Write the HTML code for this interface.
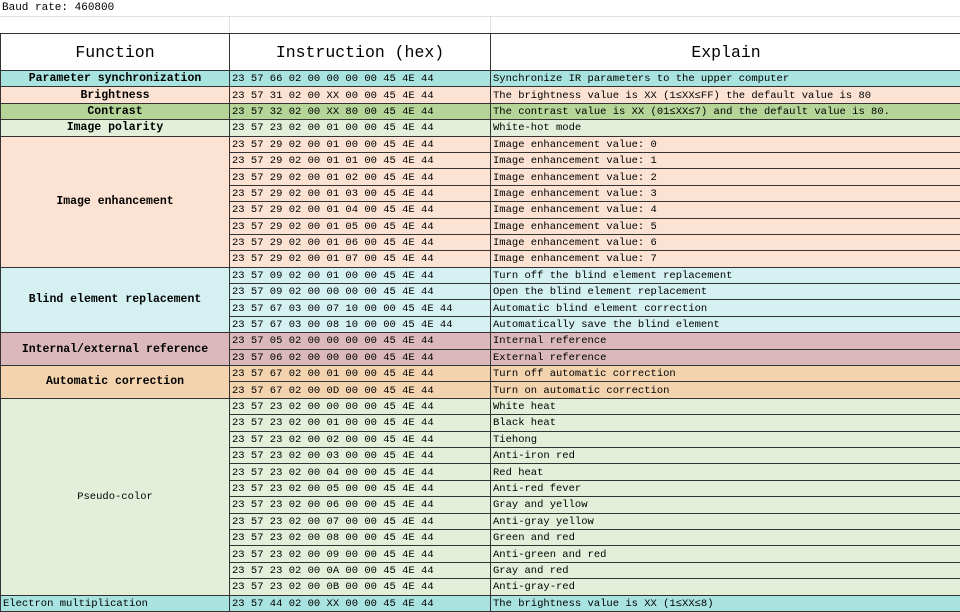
<!DOCTYPE html><html><head><style>
body{margin:0;width:960px;height:610px;overflow:hidden;background:#fff;font-family:"Liberation Mono","DejaVu Sans Mono",monospace;}
.top{position:absolute;left:0;top:0;width:960px;height:17px;font-size:11px;line-height:17px;padding-left:2px;border-bottom:1px solid #e0e0e0;box-sizing:border-box}
.g{position:absolute;top:17px;height:16px;border-right:1px solid #e0e0e0}
table{position:absolute;left:0;top:33px;border-collapse:collapse;table-layout:fixed;width:961px}
td{border:1px solid #333;padding:1px 2px 0 2px;font-size:10.5px;height:14.4px;line-height:14px;white-space:nowrap;overflow:hidden;font-family:"Liberation Mono","DejaVu Sans Mono",monospace}
th{border:1px solid #333;font-weight:normal;font-size:16.5px;height:36px;padding:0;background:#fff;font-family:"Liberation Mono","DejaVu Sans Mono",monospace}
td.f{text-align:center;font-weight:bold;font-size:11.5px}
.c{background:#a9e3df}.p{background:#fbe2d2}.gr{background:#b5d498}.lg{background:#e3efd9}.lc{background:#d4f0f0}.pk{background:#dab8bb}.o{background:#f2d3ae}
</style></head><body>
<div class="top">Baud rate: 460800</div>
<div class="g" style="left:0;width:229px"></div><div class="g" style="left:229px;width:261px"></div>
<table>
<colgroup><col style="width:229px"><col style="width:261px"><col style="width:471px"></colgroup>
<tr><th>Function</th><th>Instruction (hex)</th><th>Explain</th></tr>
<tr class="c"><td class="f">Parameter synchronization</td><td>23 57 66 02 00 00 00 00 45 4E 44</td><td>Synchronize IR parameters to the upper computer</td></tr>
<tr class="p"><td class="f">Brightness</td><td>23 57 31 02 00 XX 00 00 45 4E 44</td><td>The brightness value is XX (1≤XX≤FF) the default value is 80</td></tr>
<tr class="gr"><td class="f">Contrast</td><td>23 57 32 02 00 XX 80 00 45 4E 44</td><td>The contrast value is XX (01≤XX≤7) and the default value is 80.</td></tr>
<tr class="lg"><td class="f">Image polarity</td><td>23 57 23 02 00 01 00 00 45 4E 44</td><td>White-hot mode</td></tr>
<tr class="p"><td class="f" rowspan="8">Image enhancement</td><td>23 57 29 02 00 01 00 00 45 4E 44</td><td>Image enhancement value: 0</td></tr>
<tr class="p"><td>23 57 29 02 00 01 01 00 45 4E 44</td><td>Image enhancement value: 1</td></tr>
<tr class="p"><td>23 57 29 02 00 01 02 00 45 4E 44</td><td>Image enhancement value: 2</td></tr>
<tr class="p"><td>23 57 29 02 00 01 03 00 45 4E 44</td><td>Image enhancement value: 3</td></tr>
<tr class="p"><td>23 57 29 02 00 01 04 00 45 4E 44</td><td>Image enhancement value: 4</td></tr>
<tr class="p"><td>23 57 29 02 00 01 05 00 45 4E 44</td><td>Image enhancement value: 5</td></tr>
<tr class="p"><td>23 57 29 02 00 01 06 00 45 4E 44</td><td>Image enhancement value: 6</td></tr>
<tr class="p"><td>23 57 29 02 00 01 07 00 45 4E 44</td><td>Image enhancement value: 7</td></tr>
<tr class="lc"><td class="f" rowspan="4">Blind element replacement</td><td>23 57 09 02 00 01 00 00 45 4E 44</td><td>Turn off the blind element replacement</td></tr>
<tr class="lc"><td>23 57 09 02 00 00 00 00 45 4E 44</td><td>Open the blind element replacement</td></tr>
<tr class="lc"><td>23 57 67 03 00 07 10 00 00 45 4E 44</td><td>Automatic blind element correction</td></tr>
<tr class="lc"><td>23 57 67 03 00 08 10 00 00 45 4E 44</td><td>Automatically save the blind element</td></tr>
<tr class="pk"><td class="f" rowspan="2">Internal/external reference</td><td>23 57 05 02 00 00 00 00 45 4E 44</td><td>Internal reference</td></tr>
<tr class="pk"><td>23 57 06 02 00 00 00 00 45 4E 44</td><td>External reference</td></tr>
<tr class="o"><td class="f" rowspan="2">Automatic correction</td><td>23 57 67 02 00 01 00 00 45 4E 44</td><td>Turn off automatic correction</td></tr>
<tr class="o"><td>23 57 67 02 00 0D 00 00 45 4E 44</td><td>Turn on automatic correction</td></tr>
<tr class="lg"><td rowspan="12" style="text-align:center">Pseudo-color</td><td>23 57 23 02 00 00 00 00 45 4E 44</td><td>White heat</td></tr>
<tr class="lg"><td>23 57 23 02 00 01 00 00 45 4E 44</td><td>Black heat</td></tr>
<tr class="lg"><td>23 57 23 02 00 02 00 00 45 4E 44</td><td>Tiehong</td></tr>
<tr class="lg"><td>23 57 23 02 00 03 00 00 45 4E 44</td><td>Anti-iron red</td></tr>
<tr class="lg"><td>23 57 23 02 00 04 00 00 45 4E 44</td><td>Red heat</td></tr>
<tr class="lg"><td>23 57 23 02 00 05 00 00 45 4E 44</td><td>Anti-red fever</td></tr>
<tr class="lg"><td>23 57 23 02 00 06 00 00 45 4E 44</td><td>Gray and yellow</td></tr>
<tr class="lg"><td>23 57 23 02 00 07 00 00 45 4E 44</td><td>Anti-gray yellow</td></tr>
<tr class="lg"><td>23 57 23 02 00 08 00 00 45 4E 44</td><td>Green and red</td></tr>
<tr class="lg"><td>23 57 23 02 00 09 00 00 45 4E 44</td><td>Anti-green and red</td></tr>
<tr class="lg"><td>23 57 23 02 00 0A 00 00 45 4E 44</td><td>Gray and red</td></tr>
<tr class="lg"><td>23 57 23 02 00 0B 00 00 45 4E 44</td><td>Anti-gray-red</td></tr>
<tr class="c"><td style="text-align:left">Electron multiplication</td><td>23 57 44 02 00 XX 00 00 45 4E 44</td><td>The brightness value is XX (1≤XX≤8)</td></tr>
</table>
</body></html>
